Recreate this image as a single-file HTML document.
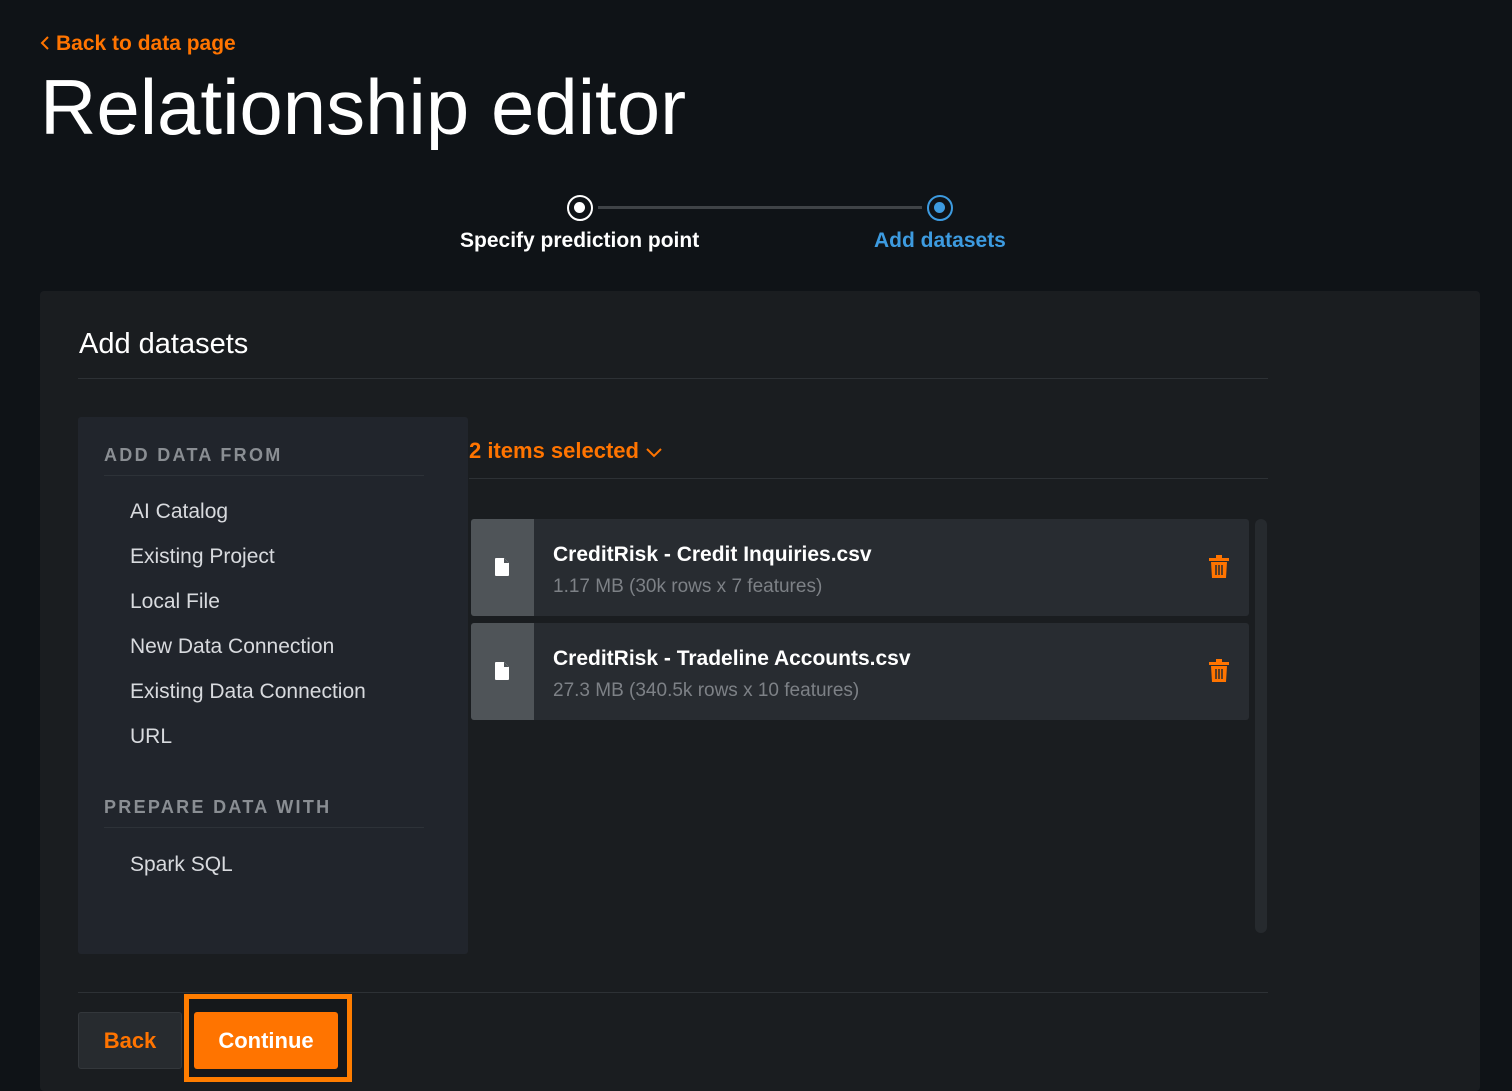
<!DOCTYPE html>
<html><head><style>
*{margin:0;padding:0;box-sizing:border-box}
body{width:1512px;height:1086px;background:#0f1317;font-family:"Liberation Sans",sans-serif;position:relative;overflow:hidden;color:#fff}
.a{position:absolute}
</style></head><body>
<div class="a" style="left:38px;top:32px;color:#ff7400;font-size:21px;font-weight:bold">
<svg width="18" height="16" style="vertical-align:-1px"><path d="M10 2L4 8L10 14" stroke="#ff7400" stroke-width="2" fill="none"/></svg>Back to data page</div>
<div class="a" style="left:40px;top:62px;font-size:78px;line-height:90px">Relationship editor</div>
<div class="a" style="left:598px;top:206px;width:324px;height:3px;background:#3f4347"></div>
<div class="a" style="left:567px;top:195px;width:26px;height:26px;border:2.5px solid #fff;border-radius:50%"><div style="margin:5px;width:11px;height:11px;background:#fff;border-radius:50%"></div></div>
<div class="a" style="left:927px;top:195px;width:26px;height:26px;border:2.5px solid #3d9be0;border-radius:50%"><div style="margin:5px;width:11px;height:11px;background:#3d9be0;border-radius:50%"></div></div>
<div class="a" style="left:460px;top:229px;font-size:21px;font-weight:bold">Specify prediction point</div>
<div class="a" style="left:874px;top:229px;font-size:21px;font-weight:bold;color:#3d9be0">Add datasets</div>
<div class="a" style="left:40px;top:291px;width:1440px;height:800px;background:#1a1d20;border-radius:4px"></div>
<div class="a" style="left:79px;top:328px;font-size:29px">Add datasets</div>
<div class="a" style="left:78px;top:378px;width:1190px;height:1px;background:#2d3135"></div>
<div class="a" style="left:78px;top:417px;width:390px;height:537px;background:#21252c;border-radius:3px"></div>
<div class="a" style="left:104px;top:445px;font-size:18px;letter-spacing:2.3px;color:#8a8e93;font-weight:bold">ADD DATA FROM</div>
<div class="a" style="left:104px;top:475px;width:320px;height:1px;background:#2d3238"></div>
<div class="a" style="left:130px;top:489px;font-size:21px;color:#d8dade;line-height:45px">AI Catalog<br>Existing Project<br>Local File<br>New Data Connection<br>Existing Data Connection<br>URL</div>
<div class="a" style="left:104px;top:797px;font-size:18px;letter-spacing:2.3px;color:#8a8e93;font-weight:bold">PREPARE DATA WITH</div>
<div class="a" style="left:104px;top:827px;width:320px;height:1px;background:#2d3238"></div>
<div class="a" style="left:130px;top:853px;font-size:21px;color:#d8dade">Spark SQL</div>
<div class="a" style="left:469px;top:438px;font-size:22px;font-weight:bold;color:#ff7400">2 items selected <svg width="18" height="12"><path d="M2 3L9 10L16 3" stroke="#ff7400" stroke-width="2" fill="none"/></svg></div>
<div class="a" style="left:469px;top:478px;width:799px;height:1px;background:#2d3135"></div>
<div class="a" style="left:1255px;top:519px;width:12px;height:414px;background:#262a2e;border-radius:6px"></div>
<div class="a" style="left:471px;top:519px;width:778px;height:97px;background:#282c31;border-radius:3px;overflow:hidden">
<div style="position:absolute;left:0;top:0;width:63px;height:97px;background:#4f5458"></div>
<svg style="position:absolute;left:24px;top:39px" width="14" height="18"><path d="M0 1Q0 0 1 0H9L14 5V17Q14 18 13 18H1Q0 18 0 17Z" fill="#fff"/><path d="M9 0V5H14" fill="#4f5458"/></svg>
<div style="position:absolute;left:82px;top:24px;font-size:21px;font-weight:bold">CreditRisk - Credit Inquiries.csv</div>
<div style="position:absolute;left:82px;top:57px;font-size:19px;color:#7d8186">1.17 MB (30k rows x 7 features)</div>
<svg style="position:absolute;left:738px;top:36px" width="20" height="24"><rect x="0" y="3" width="20" height="3" fill="#ff7400"/><rect x="7" y="0" width="6" height="3" fill="#ff7400"/><path d="M2 7H18L17 23H3Z" fill="#ff7400"/><path d="M7 10V20M10 10V20M13 10V20" stroke="#282c31" stroke-width="1.5"/></svg>
</div>
<div class="a" style="left:471px;top:623px;width:778px;height:97px;background:#282c31;border-radius:3px;overflow:hidden">
<div style="position:absolute;left:0;top:0;width:63px;height:97px;background:#4f5458"></div>
<svg style="position:absolute;left:24px;top:39px" width="14" height="18"><path d="M0 1Q0 0 1 0H9L14 5V17Q14 18 13 18H1Q0 18 0 17Z" fill="#fff"/><path d="M9 0V5H14" fill="#4f5458"/></svg>
<div style="position:absolute;left:82px;top:24px;font-size:21px;font-weight:bold">CreditRisk - Tradeline Accounts.csv</div>
<div style="position:absolute;left:82px;top:57px;font-size:19px;color:#7d8186">27.3 MB (340.5k rows x 10 features)</div>
<svg style="position:absolute;left:738px;top:36px" width="20" height="24"><rect x="0" y="3" width="20" height="3" fill="#ff7400"/><rect x="7" y="0" width="6" height="3" fill="#ff7400"/><path d="M2 7H18L17 23H3Z" fill="#ff7400"/><path d="M7 10V20M10 10V20M13 10V20" stroke="#282c31" stroke-width="1.5"/></svg>
</div>
<div class="a" style="left:78px;top:992px;width:1190px;height:1px;background:#2d3135"></div>
<div class="a" style="left:78px;top:1012px;width:104px;height:57px;background:#272b2f;border:1px solid #33373b;border-radius:3px;color:#ff7400;font-size:22px;font-weight:bold;text-align:center;line-height:55px">Back</div>
<div class="a" style="left:184px;top:994px;width:168px;height:88px;border:5px solid #ff7d00;background:#15181b"></div>
<div class="a" style="left:194px;top:1012px;width:144px;height:57px;background:#ff7400;border-radius:3px;font-size:22px;font-weight:bold;text-align:center;line-height:57px">Continue</div>
</body></html>
